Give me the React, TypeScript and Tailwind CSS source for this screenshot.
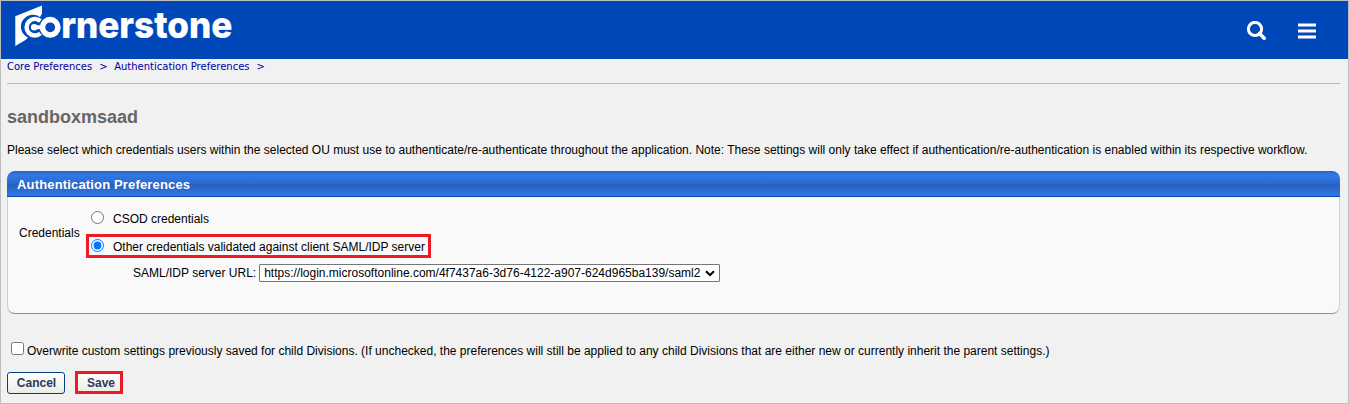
import React from "react";

function Logo() {
  return (
    <svg width="240" height="57" viewBox="0 0 240 57" className="block overflow-visible" role="img" aria-label="Cornerstone">
      <path d="M14.3 15.2L41 4.5V12.5L39 16.3A11.8 11.8 0 1 0 27 36.4L24.5 39L14.3 45Z" fill="#fff" />
      <path d="M39.4 20A8.3 8.3 0 1 0 39.4 32.4" fill="none" stroke="#fff" strokeWidth="4.4" />
      <circle cx="49.2" cy="26.3" r="7.7" fill="none" stroke="#fff" strokeWidth="5.6" />
      <circle cx="33.2" cy="26.2" r="3.3" fill="#fff" />
      <path d="M33 24.2H43V28.2H33Z" fill="#fff" />
      <text x="60.2" y="36.8" textLength="171" lengthAdjust="spacingAndGlyphs" fill="#fff" fontSize="37" fontWeight="800" fontFamily="Inter, sans-serif" stroke="#fff" strokeWidth="0.2">rnerstone</text>
    </svg>
  );
}

export default function App() {
  return (
    <div className="flex h-[404px] w-[1349px] flex-col overflow-hidden border border-[#bdbdbd] bg-[#f1f1f1] font-['Liberation_Sans',Arial,sans-serif] text-[12px] leading-[14px] text-black">
      <header className="flex h-[58px] shrink-0 items-start justify-between bg-[#0047ba]">
        <Logo />
        <div className="flex items-center gap-[31px] pt-[20px] pr-[30px]">
          <svg width="20" height="20" viewBox="0 0 20 20" fill="none" stroke="#fff">
            <circle cx="8" cy="8" r="6.6" strokeWidth="3" />
            <path d="M12.5 12.5L17.2 17.2" strokeWidth="3.6" strokeLinecap="round" />
          </svg>
          <svg width="20" height="20" viewBox="0 0 20 20" fill="#fff">
            <path d="M0 2.5H18V5.5H0ZM0 8.5H18V11.5H0ZM0 14.5H18V17.5H0Z" />
          </svg>
        </div>
      </header>

      <nav className="mr-[8px] ml-[6px] flex h-[25px] shrink-0 gap-[8px] border-b border-[#b9b9b9] pt-px font-['DejaVu_Sans',Verdana,sans-serif] text-[10px] text-[#0000a0]">
        <a>Core Preferences</a>
        <span className="-ml-px w-[7px]">&gt;</span>
        <a>Authentication Preferences</a>
        <span className="-ml-px w-[8px]">&gt;</span>
      </nav>

      <main className="flex flex-col pr-[8px] pl-[6px]">
        <h1 className="mt-[23px] text-[18px] leading-[21px] font-bold text-[#666]">sandboxmsaad</h1>
        <p className="mt-[15px] whitespace-nowrap">
          Please select which credentials users within the selected OU must use to authenticate/re-authenticate throughout the application. Note: These settings will only take effect if authentication/re-authentication is enabled within its respective workflow.
        </p>

        <section className="mt-[14px] h-[143px] overflow-hidden rounded-[8px] border-b border-[#8f8f8f] bg-[#f9f9f9]">
          <h2 className="flex h-[26px] items-center border-b border-[#0a46b4] bg-[linear-gradient(#2563c0_0%,#3078e6_15%,#2c6cd2_48%,#2860ba_52%,#3078e8_100%)] pt-[2px] pl-[10px] text-[13px] font-bold tracking-[0.16px] text-white">
            Authentication Preferences
          </h2>
          <div className="flex h-[116px] rounded-b-[8px] border-x border-[#d0d0d0] pt-[10px]">
            <div className="w-[78px] pt-[19px] pl-[11px]">Credentials</div>
            <div className="flex flex-col">
              <label className="flex h-[20px] items-center gap-[9px] pl-[5px]">
                <input type="radio" name="credentials" className="m-0 size-[13px]" />
                <span className="pt-[3px]">CSOD credentials</span>
              </label>
              <label className="mt-[7px] flex h-[24px] w-[345px] items-center gap-[9px] border-3 border-[#ed1c24] pl-[2px]">
                <input type="radio" name="credentials" defaultChecked className="m-0 mb-[2px] size-[13px]" />
                <span className="pt-px whitespace-nowrap">Other credentials validated against client SAML/IDP server</span>
              </label>
              <div className="mt-[6px] flex items-center gap-[3px] pl-[47px]">
                <span className="whitespace-nowrap">SAML/IDP server URL:</span>
                <div className="flex h-[18px] w-[461px] items-center justify-between rounded-[1px] border border-[#767676] bg-white pr-[4px] pl-[4px]">
                  <span className="whitespace-nowrap">https://login.microsoftonline.com/4f7437a6-3d76-4122-a907-624d965ba139/saml2</span>
                  <svg width="10" height="7" viewBox="0 0 10 7" fill="none" stroke="#000" strokeWidth="2">
                    <path d="M1 1.2L5 5L9 1.2" />
                  </svg>
                </div>
              </div>
            </div>
          </div>
        </section>

        <label className="mt-[28px] flex h-[16px] items-center gap-[3px] pl-[4px]">
          <input type="checkbox" className="m-0 mb-[4px] size-[13px]" />
          <span className="pt-[2px] whitespace-nowrap">
            Overwrite custom settings previously saved for child Divisions. (If unchecked, the preferences will still be applied to any child Divisions that are either new or currently inherit the parent settings.)
          </span>
        </label>

        <div className="mt-[13px] flex items-start gap-[10px]">
          <button className="mt-px h-[22px] w-[58px] rounded-[3px] border border-[#0a3f7f] bg-[linear-gradient(#fff,#ecece6)] pl-px text-[12px] font-bold text-[#2b3a5a]">Cancel</button>
          <button className="h-[23px] w-[48px] border-3 border-[#ed1c24] bg-[linear-gradient(#fff,#ecece6)] pl-[4px] text-[12px] font-bold text-[#2b3a5a]">Save</button>
        </div>
      </main>
    </div>
  );
}
